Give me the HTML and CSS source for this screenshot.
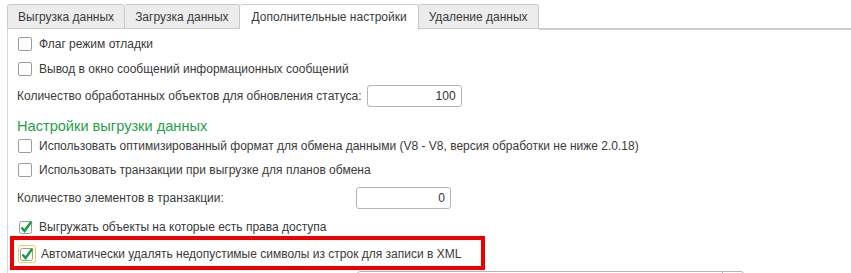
FILE: index.html
```html
<!DOCTYPE html>
<html lang="ru">
<head>
    <meta charset="UTF-8">
    <title>Дополнительные настройки</title>
    <link rel="stylesheet" href="styles.css">
</head>
<body>
    <div class="tabs">
        <div class="tab">Выгрузка данных</div>
        <div class="tab">Загрузка данных</div>
        <div class="tab active">Дополнительные настройки</div>
        <div class="tab">Удаление данных</div>
        <div class="tab-rest"></div>
    </div>

    <div class="panel">
        <label class="row r1"><span class="box"></span>Флаг режим отладки</label>
        <label class="row r2"><span class="box"></span>Вывод в окно сообщений информационных сообщений</label>
        <div class="row field r3">
            Количество обработанных объектов для обновления статуса:
            <span class="input w1">100</span>
        </div>

        <h3 class="group">Настройки выгрузки данных</h3>
        <label class="row r4"><span class="box"></span>Использовать оптимизированный формат для обмена данными (V8 - V8, версия обработки не ниже 2.0.18)</label>
        <label class="row r5"><span class="box"></span>Использовать транзакции при выгрузке для планов обмена</label>
        <div class="row field r6">
            Количество элементов в транзакции:
            <span class="input w2">0</span>
        </div>
        <label class="row r7">
            <svg class="check" width="16" height="16" viewBox="0 0 16 16">
                <rect x="1.5" y="2.5" width="12" height="12" rx="2" fill="#fff" stroke="#9c9c9c"/>
                <path d="M3.5 8.5 L6.5 12 L13.5 2.5" fill="none" stroke="#14a03a" stroke-width="2.5"/>
            </svg>Выгружать объекты на которые есть права доступа
        </label>

        <div class="highlight">
            <label class="row r8">
                <svg class="check focus" width="18" height="18" viewBox="0 0 18 18">
                    <rect x="0.5" y="0.5" width="17" height="17" rx="2" fill="none" stroke="#f2c94c"/>
                    <rect x="2.5" y="3.5" width="12" height="12" rx="2" fill="#fff" stroke="#9c9c9c"/>
                    <path d="M4.5 9.5 L7.5 13 L14.5 3.5" fill="none" stroke="#14a03a" stroke-width="2.5"/>
                </svg>Автоматически удалять недопустимые символы из строк для записи в XML
            </label>
        </div>

        <div class="row bottom">
            <span class="combo"><span class="combo-btn"></span></span>
        </div>
    </div>
</body>
</html>
```

FILE: styles.css
```css
body {
    margin: 0;
    font-family: "Liberation Sans", Arial, sans-serif;
    font-size: 12px;
    color: #3a3a3a;
    background: #fff;
    height: 273px;
    overflow: hidden;
}

.tabs {
    display: flex;
    align-items: flex-end;
    padding: 4px 0 0 7px;
    height: 25px;
}

.tab {
    box-sizing: border-box;
    height: 25px;
    padding: 0 10px;
    display: flex;
    align-items: center;
    background: #ececec;
    border: 1px solid #c8c8c8;
    border-left: none;
    border-radius: 3px 3px 0 0;
    white-space: nowrap;
}

.tab:first-child {
    border-left: 1px solid #c8c8c8;
}

.tab.active {
    height: 26px;
    margin-bottom: -1px;
    background: #fff;
    border-bottom: none;
    padding: 0 11px 1px 12px;
}

.tab-rest {
    flex: 1;
    border-bottom: 2px solid #cdcdcd;
    margin-bottom: -1px;
}

.panel {
    border-left: 1px solid #d4d4d4;
    margin-left: 7px;
    height: 244px;
    overflow: hidden;
    display: flex;
    flex-direction: column;
}

.row {
    display: flex;
    flex-shrink: 0;
    align-items: center;
    padding-left: 10px;
    white-space: nowrap;
    height: 20px;
}

.box {
    box-sizing: border-box;
    width: 14px;
    height: 14px;
    border: 1px solid #9c9c9c;
    border-radius: 2px;
    margin-right: 7px;
    background: #fff;
}

.check {
    margin-right: 5px;
    flex-shrink: 0;
}

.r1 { margin-top: 5px; }
.r2 { margin-top: 5px; }
.r3 { margin-top: 6px; height: 22px; }
.r4 { margin-top: 1px; }
.r5 { margin-top: 4px; }
.r6 { margin-top: 7px; height: 22px; }
.r7 { margin-top: 9px; height: 18px; }

.field {
    padding-left: 9px;
}

.input {
    box-sizing: border-box;
    display: inline-flex;
    align-items: center;
    justify-content: flex-end;
    height: 22px;
    padding-right: 5px;
    border: 1px solid #b5b5b5;
    border-radius: 3px;
    color: #333;
}

.w1 { width: 95px; margin-left: 5px; }
.w2 { width: 95px; margin-left: 132px; }

.group {
    flex-shrink: 0;
    margin: 9px 0 0 0;
    padding-left: 9px;
    height: 19px;
    font-size: 14.6px;
    font-weight: normal;
    color: #1f9f4a;
    display: flex;
    align-items: center;
}

.highlight {
    box-sizing: border-box;
    flex-shrink: 0;
    width: 475px;
    height: 34px;
    margin: 0 0 0 2px;
    border: 4px solid #ee0000;
    display: flex;
    align-items: center;
}

.r8 {
    padding-left: 4px;
    height: 24px;
    margin-top: 1px;
}

.bottom {
    margin-top: 1px;
    padding-left: 349px;
    align-items: flex-start;
}

.combo {
    box-sizing: border-box;
    display: block;
    width: 387px;
    height: 22px;
    border: 1px solid #b5b5b5;
    border-radius: 3px;
    position: relative;
}

.combo-btn {
    position: absolute;
    right: 0;
    top: 0;
    width: 20px;
    height: 20px;
    border-left: 1px solid #b5b5b5;
}
```
